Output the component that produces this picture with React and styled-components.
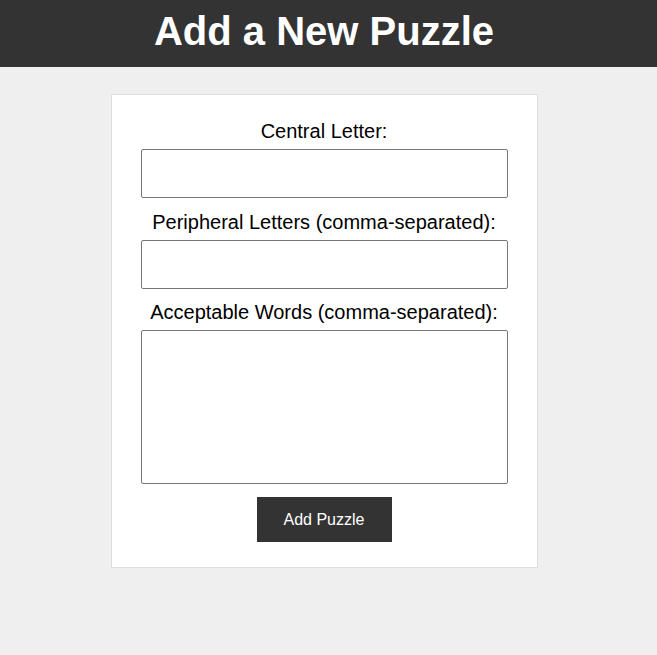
import React from "react";
import styled, { createGlobalStyle } from "styled-components";

const Global = createGlobalStyle`
  html, body {
    margin: 0;
    padding: 0;
    background: #efefef;
    font-family: "Liberation Sans", Arial, sans-serif;
  }
  * { box-sizing: border-box; }
`;

const Header = styled.header`
  background: #333333;
  color: #ffffff;
  padding: 8px 9px 13px 0;
  text-align: center;
`;

const Title = styled.h1`
  margin: 0;
  font-size: 40px;
  font-weight: bold;
  line-height: 46px;
`;

const Main = styled.main`
  display: flex;
  justify-content: center;
  padding: 27px 9px 0 0;
`;

const Card = styled.form`
  width: 427px;
  background: #ffffff;
  border: 1px solid #dddddd;
  padding: 25px 29px;
  display: flex;
  flex-direction: column;
  align-items: center;
`;

const Label = styled.label`
  display: block;
  font-size: 20px;
  line-height: 23px;
  color: #000000;
  text-align: center;
  margin-bottom: 6px;
`;

const Input = styled.input`
  display: block;
  width: 100%;
  height: 49px;
  border: 1px solid #767676;
  border-radius: 2px;
  background: #ffffff;
  margin: 0 0 12.5px;
  font-size: 16px;
  padding: 0 8px;
`;

const TextArea = styled.textarea`
  display: block;
  width: 100%;
  height: 154px;
  border: 1px solid #767676;
  border-radius: 2px;
  background: #ffffff;
  margin: 0 0 13px;
  resize: none;
  font-size: 16px;
  padding: 8px;
`;

const Button = styled.button`
  background: #333333;
  color: #ffffff;
  border: none;
  font-family: "Liberation Sans", Arial, sans-serif;
  font-size: 16px;
  line-height: 19px;
  padding: 13px 26px;
  width: 135px;
  height: 45px;
  cursor: pointer;
`;

export default function App() {
  return (
    <>
      <Global />
      <Header>
        <Title>Add a New Puzzle</Title>
      </Header>
      <Main>
        <Card onSubmit={(e) => e.preventDefault()}>
          <Label htmlFor="central">Central Letter:</Label>
          <Input id="central" type="text" />
          <Label htmlFor="peripheral">Peripheral Letters (comma-separated):</Label>
          <Input id="peripheral" type="text" />
          <Label htmlFor="words">Acceptable Words (comma-separated):</Label>
          <TextArea id="words" />
          <Button type="submit">Add Puzzle</Button>
        </Card>
      </Main>
    </>
  );
}
